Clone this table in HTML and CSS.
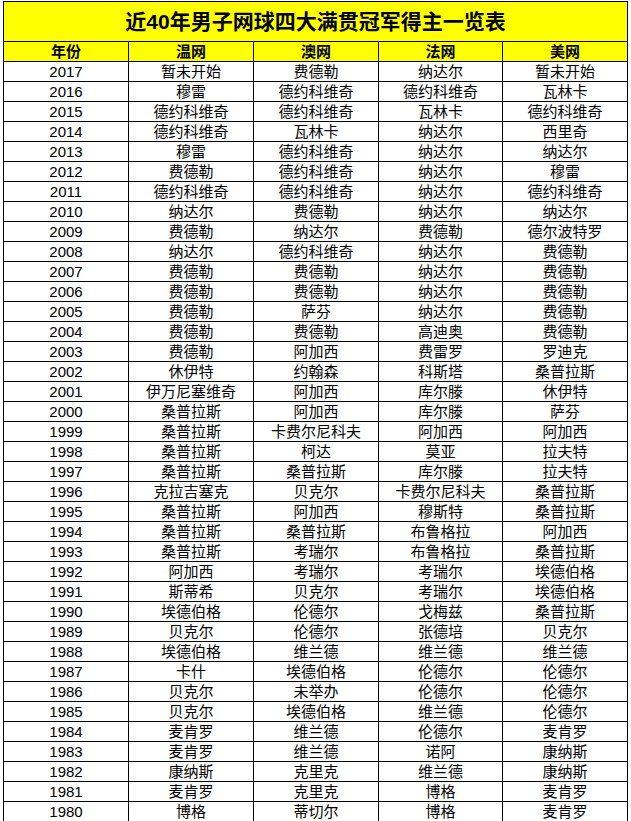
FILE: index.html
```html
<!DOCTYPE html>
<html lang="zh-CN">
<head>
<meta charset="utf-8">
<title>近40年男子网球四大满贯冠军得主一览表</title>
<link rel="stylesheet" href="styles.css">
</head>
<body>
<table class="grid">
<colgroup><col class="c"><col class="c"><col class="c"><col class="c4"><col class="c"></colgroup>
<thead>
<tr class="title-row"><th colspan="5" class="title">近40年男子网球四大满贯冠军得主一览表</th></tr>
<tr class="head-row"><th>年份</th><th>温网</th><th>澳网</th><th>法网</th><th>美网</th></tr>
</thead>
<tbody>
<tr><td>2017</td><td>暂未开始</td><td>费德勒</td><td>纳达尔</td><td>暂未开始</td></tr>
<tr><td>2016</td><td>穆雷</td><td>德约科维奇</td><td>德约科维奇</td><td>瓦林卡</td></tr>
<tr><td>2015</td><td>德约科维奇</td><td>德约科维奇</td><td>瓦林卡</td><td>德约科维奇</td></tr>
<tr><td>2014</td><td>德约科维奇</td><td>瓦林卡</td><td>纳达尔</td><td>西里奇</td></tr>
<tr><td>2013</td><td>穆雷</td><td>德约科维奇</td><td>纳达尔</td><td>纳达尔</td></tr>
<tr><td>2012</td><td>费德勒</td><td>德约科维奇</td><td>纳达尔</td><td>穆雷</td></tr>
<tr><td>2011</td><td>德约科维奇</td><td>德约科维奇</td><td>纳达尔</td><td>德约科维奇</td></tr>
<tr><td>2010</td><td>纳达尔</td><td>费德勒</td><td>纳达尔</td><td>纳达尔</td></tr>
<tr><td>2009</td><td>费德勒</td><td>纳达尔</td><td>费德勒</td><td>德尔波特罗</td></tr>
<tr><td>2008</td><td>纳达尔</td><td>德约科维奇</td><td>纳达尔</td><td>费德勒</td></tr>
<tr><td>2007</td><td>费德勒</td><td>费德勒</td><td>纳达尔</td><td>费德勒</td></tr>
<tr><td>2006</td><td>费德勒</td><td>费德勒</td><td>纳达尔</td><td>费德勒</td></tr>
<tr><td>2005</td><td>费德勒</td><td>萨芬</td><td>纳达尔</td><td>费德勒</td></tr>
<tr><td>2004</td><td>费德勒</td><td>费德勒</td><td>高迪奥</td><td>费德勒</td></tr>
<tr><td>2003</td><td>费德勒</td><td>阿加西</td><td>费雷罗</td><td>罗迪克</td></tr>
<tr><td>2002</td><td>休伊特</td><td>约翰森</td><td>科斯塔</td><td>桑普拉斯</td></tr>
<tr><td>2001</td><td>伊万尼塞维奇</td><td>阿加西</td><td>库尔滕</td><td>休伊特</td></tr>
<tr><td>2000</td><td>桑普拉斯</td><td>阿加西</td><td>库尔滕</td><td>萨芬</td></tr>
<tr><td>1999</td><td>桑普拉斯</td><td>卡费尔尼科夫</td><td>阿加西</td><td>阿加西</td></tr>
<tr><td>1998</td><td>桑普拉斯</td><td>柯达</td><td>莫亚</td><td>拉夫特</td></tr>
<tr><td>1997</td><td>桑普拉斯</td><td>桑普拉斯</td><td>库尔滕</td><td>拉夫特</td></tr>
<tr><td>1996</td><td>克拉吉塞克</td><td>贝克尔</td><td>卡费尔尼科夫</td><td>桑普拉斯</td></tr>
<tr><td>1995</td><td>桑普拉斯</td><td>阿加西</td><td>穆斯特</td><td>桑普拉斯</td></tr>
<tr><td>1994</td><td>桑普拉斯</td><td>桑普拉斯</td><td>布鲁格拉</td><td>阿加西</td></tr>
<tr><td>1993</td><td>桑普拉斯</td><td>考瑞尔</td><td>布鲁格拉</td><td>桑普拉斯</td></tr>
<tr><td>1992</td><td>阿加西</td><td>考瑞尔</td><td>考瑞尔</td><td>埃德伯格</td></tr>
<tr><td>1991</td><td>斯蒂希</td><td>贝克尔</td><td>考瑞尔</td><td>埃德伯格</td></tr>
<tr><td>1990</td><td>埃德伯格</td><td>伦德尔</td><td>戈梅兹</td><td>桑普拉斯</td></tr>
<tr><td>1989</td><td>贝克尔</td><td>伦德尔</td><td>张德培</td><td>贝克尔</td></tr>
<tr><td>1988</td><td>埃德伯格</td><td>维兰德</td><td>维兰德</td><td>维兰德</td></tr>
<tr><td>1987</td><td>卡什</td><td>埃德伯格</td><td>伦德尔</td><td>伦德尔</td></tr>
<tr><td>1986</td><td>贝克尔</td><td>未举办</td><td>伦德尔</td><td>伦德尔</td></tr>
<tr><td>1985</td><td>贝克尔</td><td>埃德伯格</td><td>维兰德</td><td>伦德尔</td></tr>
<tr><td>1984</td><td>麦肯罗</td><td>维兰德</td><td>伦德尔</td><td>麦肯罗</td></tr>
<tr><td>1983</td><td>麦肯罗</td><td>维兰德</td><td>诺阿</td><td>康纳斯</td></tr>
<tr><td>1982</td><td>康纳斯</td><td>克里克</td><td>维兰德</td><td>康纳斯</td></tr>
<tr><td>1981</td><td>麦肯罗</td><td>克里克</td><td>博格</td><td>麦肯罗</td></tr>
<tr><td>1980</td><td>博格</td><td>蒂切尔</td><td>博格</td><td>麦肯罗</td></tr>
</tbody>
</table>
</body>
</html>
```
FILE: styles.css
```css
html, body {
  margin: 0;
  padding: 0;
  background: #ffffff;
}
body {
  padding: 1px 0 0 3px;
  font-family: "Liberation Sans", "Noto Sans CJK SC", sans-serif;
  color: #000000;
}
.grid {
  border-collapse: separate;
  border-spacing: 1px;
  background: #000000;
  table-layout: fixed;
  width: 625px;
}
.c { width: 124px; }
.c4 { width: 123px; }
.grid th,
.grid td {
  padding: 1px 0 0 0;
  height: 18px;
  line-height: 18px;
  text-align: center;
  font-size: 15px;
  font-weight: 400;
  white-space: nowrap;
  overflow: hidden;
  background: #ffffff;
}
.head-row th {
  background: #ffff00;
  font-weight: 700;
}
.title-row .title {
  background: #ffff00;
  height: 38px;
  line-height: 38px;
  font-size: 21px;
  font-weight: 700;
}
```
